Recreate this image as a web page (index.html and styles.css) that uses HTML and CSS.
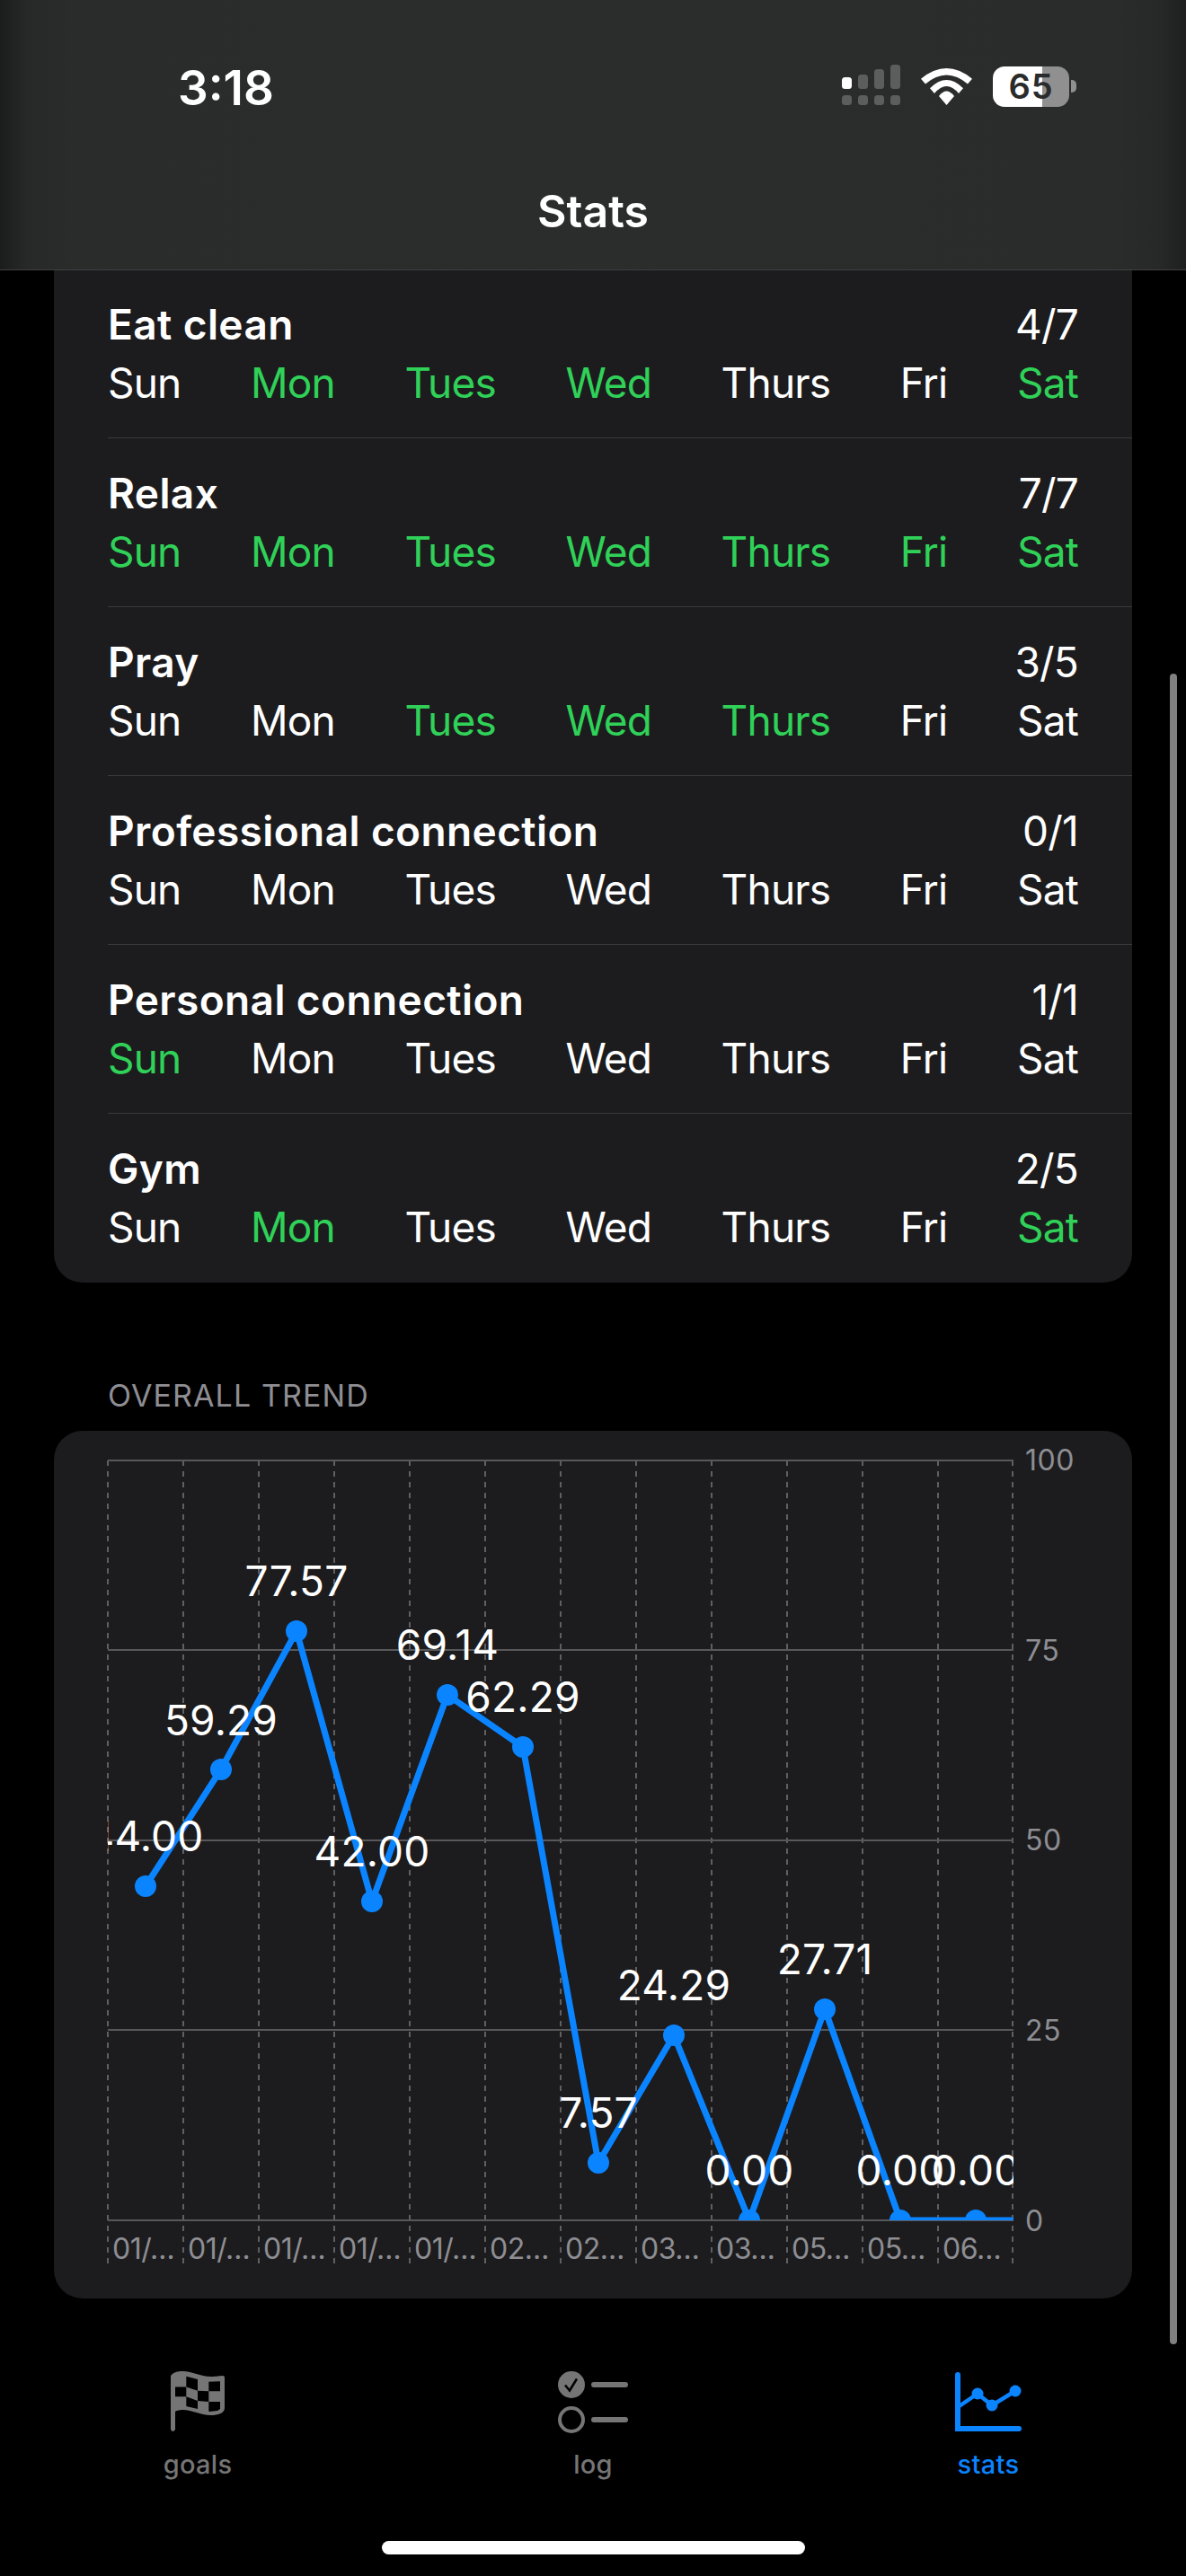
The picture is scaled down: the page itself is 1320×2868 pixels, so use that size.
FILE: index.html
```html
<!DOCTYPE html>
<html>
	<head>
		<meta charset="UTF-8">
		<title>Stats</title>
		<link rel="stylesheet" href="styles.css">
	</head>
	<body>
		<div class="page">
			<header class="top">
				<div class="status">
					<span class="clock">3:18</span>
					<div class="status-icons">
						<svg class="signal" width="65" height="47" viewBox="0 0 65 47">
							<rect x="0" y="14" width="11" height="13" rx="3.5" fill="#fff"/>
							<rect x="18" y="11" width="11" height="16" rx="3.5"/>
							<rect x="36" y="5" width="11" height="22" rx="3.5"/>
							<rect x="54" y="0" width="11" height="27" rx="3.5"/>
							<rect x="0" y="34" width="11" height="11" rx="3.5"/>
							<rect x="18" y="34" width="11" height="11" rx="3.5"/>
							<rect x="36" y="34" width="11" height="11" rx="3.5"/>
							<rect x="54" y="34" width="11" height="11" rx="3.5"/>
						</svg>
						<svg class="wifi" width="57" height="41" viewBox="0 0 57 41">
							<path d="M0 11.7Q28.5 -11.7 57 11.7L52 17.5Q28.5 -2.5 5 17.5Z"/>
							<path d="M10 22.3Q28.5 3.7 47 22.3L42 28Q28.5 12 15 28Z"/>
							<path d="M20 31Q28.5 20 37 31L28.5 41Z"/>
						</svg>
						<div class="battery"><span>65</span></div>
						<div class="battery-tip"></div>
					</div>
				</div>
				<h1 class="title">Stats</h1>
			</header>

			<main class="content">
				<section class="card habits">
					<div class="habit">
						<div class="habit-head"><span class="habit-name">Eat clean</span><span class="habit-count">4/7</span></div>
						<div class="days"><span>Sun</span><span class="on">Mon</span><span class="on">Tues</span><span class="on">Wed</span><span>Thurs</span><span>Fri</span><span class="on">Sat</span></div>
					</div>
					<div class="habit">
						<div class="habit-head"><span class="habit-name">Relax</span><span class="habit-count">7/7</span></div>
						<div class="days"><span class="on">Sun</span><span class="on">Mon</span><span class="on">Tues</span><span class="on">Wed</span><span class="on">Thurs</span><span class="on">Fri</span><span class="on">Sat</span></div>
					</div>
					<div class="habit">
						<div class="habit-head"><span class="habit-name">Pray</span><span class="habit-count">3/5</span></div>
						<div class="days"><span>Sun</span><span>Mon</span><span class="on">Tues</span><span class="on">Wed</span><span class="on">Thurs</span><span>Fri</span><span>Sat</span></div>
					</div>
					<div class="habit">
						<div class="habit-head"><span class="habit-name">Professional connection</span><span class="habit-count">0/1</span></div>
						<div class="days"><span>Sun</span><span>Mon</span><span>Tues</span><span>Wed</span><span>Thurs</span><span>Fri</span><span>Sat</span></div>
					</div>
					<div class="habit">
						<div class="habit-head"><span class="habit-name">Personal connection</span><span class="habit-count">1/1</span></div>
						<div class="days"><span class="on">Sun</span><span>Mon</span><span>Tues</span><span>Wed</span><span>Thurs</span><span>Fri</span><span>Sat</span></div>
					</div>
					<div class="habit">
						<div class="habit-head"><span class="habit-name">Gym</span><span class="habit-count">2/5</span></div>
						<div class="days"><span>Sun</span><span class="on">Mon</span><span>Tues</span><span>Wed</span><span>Thurs</span><span>Fri</span><span class="on">Sat</span></div>
					</div>
				</section>

				<h2 class="section-label">OVERALL TREND</h2>

				<section class="card chart">
					<svg width="1200" height="966" viewBox="60 1593 1200 966">
						<defs>
							<clipPath id="plot"><rect x="120" y="1590" width="1008" height="882"/></clipPath>
						</defs>
						<path class="grid-v" d="M120 1626V2520M204 1626V2520M288 1626V2520M372 1626V2520M456 1626V2520M540 1626V2520M624 1626V2520M708 1626V2520M792 1626V2520M876 1626V2520M960 1626V2520M1044 1626V2520M1127 1626V2520"/>
						<path class="grid-h" d="M120 1626H1128M120 1837H1128M120 2049H1128M120 2260H1128M120 2472H1128"/>
						<g clip-path="url(#plot)">
							<polyline class="trend" points="162,2100 246,1970 330,1816 414,2117 498,1887 582,1945 666,2408 750,2266 834,2472 918,2237 1002,2472 1086,2472 1128,2472"/>
							<g class="dots">
								<circle cx="162" cy="2100" r="12"/>
								<circle cx="246" cy="1970" r="12"/>
								<circle cx="330" cy="1816" r="12"/>
								<circle cx="414" cy="2117" r="12"/>
								<circle cx="498" cy="1887" r="12"/>
								<circle cx="582" cy="1945" r="12"/>
								<circle cx="666" cy="2408" r="12"/>
								<circle cx="750" cy="2266" r="12"/>
								<circle cx="834" cy="2472" r="12"/>
								<circle cx="918" cy="2237" r="12"/>
								<circle cx="1002" cy="2472" r="12"/>
								<circle cx="1086" cy="2472" r="12"/>
							</g>
							<g class="values">
								<text x="162" y="2061">44.00</text>
								<text x="246" y="1932">59.29</text>
								<text x="330" y="1777">77.57</text>
								<text x="414" y="2078">42.00</text>
								<text x="498" y="1848">69.14</text>
								<text x="582" y="1906">62.29</text>
								<text x="666" y="2369">7.57</text>
								<text x="750" y="2227">24.29</text>
								<text x="834" y="2433">0.00</text>
								<text x="918" y="2198">27.71</text>
								<text x="1002" y="2433">0.00</text>
								<text x="1086" y="2433">0.00</text>
							</g>
						</g>
						<g class="axis-y">
							<text x="1141" y="1637">100</text>
							<text x="1141" y="1849">75</text>
							<text x="1141" y="2060">50</text>
							<text x="1141" y="2272">25</text>
							<text x="1141" y="2484">0</text>
						</g>
						<g class="axis-x">
							<text x="125" y="2515">01/…</text>
							<text x="209" y="2515">01/…</text>
							<text x="293" y="2515">01/…</text>
							<text x="377" y="2515">01/…</text>
							<text x="461" y="2515">01/…</text>
							<text x="545" y="2515">02…</text>
							<text x="629" y="2515">02…</text>
							<text x="713" y="2515">03…</text>
							<text x="797" y="2515">03…</text>
							<text x="881" y="2515">05…</text>
							<text x="965" y="2515">05…</text>
							<text x="1049" y="2515">06…</text>
						</g>
					</svg>
				</section>
			</main>

			<nav class="tabs">
				<div class="tab">
					<svg width="60" height="70" viewBox="0 0 60 70">
						<path class="flag" d="M0 5C3 1 8 0 13 0C25 0 32 6 45 6C50 6 56 5 58 5Q60 5 60 7V41C60 47 52 49 45 49C32 49 25 43 13 43C9 43 6 44 5 45V65Q2.5 69 0 65Z"/>
						<g class="flag-cells">
							<polygon points="17.3,5.7 30,9 30,21.7 17.3,17.5"/>
							<polygon points="42.3,11.7 55,11.2 55,22.3 42.3,22.3"/>
							<polygon points="5,17.5 17.3,17.5 17.3,28.3 5,28.3"/>
							<polygon points="30,21.7 42.3,22.3 42.3,34 30,33"/>
							<polygon points="17.3,28.3 30,33 30,42 17.3,39"/>
							<polygon points="42.3,34 55,34 55,42 52,44 42.3,45"/>
						</g>
					</svg>
					<span>goals</span>
				</div>
				<div class="tab">
					<svg width="78" height="70" viewBox="0 0 78 70">
						<circle class="tab-fill" cx="15" cy="15" r="15"/>
						<path d="M8 15.5L13 21.5L21 8.5" fill="none" stroke="#000" stroke-width="2.5"/>
						<circle cx="15" cy="54" r="13" fill="none" stroke="#757575" stroke-width="4"/>
						<rect class="tab-fill" x="37" y="12" width="41" height="6" rx="3"/>
						<rect class="tab-fill" x="37" y="51" width="41" height="6" rx="3"/>
					</svg>
					<span>log</span>
				</div>
				<div class="tab active">
					<svg width="74" height="70" viewBox="0 0 74 70">
						<path d="M3 4V64H71" fill="none" stroke="#0a84ff" stroke-width="6" stroke-linecap="round"/>
						<polyline points="3,40 25,25 41,38 67,22" fill="none" stroke="#0a84ff" stroke-width="4.5"/>
						<circle cx="25" cy="25" r="6.5" fill="#0a84ff"/>
						<circle cx="41" cy="38" r="6.5" fill="#0a84ff"/>
						<circle cx="67" cy="22" r="6.5" fill="#0a84ff"/>
					</svg>
					<span>stats</span>
				</div>
			</nav>
			<div class="home-bar"></div>
			<div class="scrollbar"></div>
		</div>
	</body>
</html>
```
FILE: styles.css
```css
*{
	box-sizing:border-box;
}
body{
	margin:0;
	background:#000;
	color:#fff;
	font-family:Inter,"Liberation Sans",sans-serif;
}
.page{
	position:relative;
	width:1320px;
	height:2868px;
	overflow:hidden;
}

/* top bar */
.top{
	height:300px;
	padding:0 122px;
	background:linear-gradient(to right,#1b1c1c 0,#272929 30px,#2a2c2c 80px,#2b2c2c 660px,#2a2c2c 1240px,#272929 1290px,#1e1f1f 100%);
	box-shadow:0 1px 0 #3e3f3f;
	position:relative;
	z-index:1;
}
.status{
	display:flex;
	justify-content:space-between;
	align-items:flex-start;
	height:205px;
}
.clock{
	margin:66px 0 0 76px;
	font-size:53px;
	line-height:64px;
	font-weight:600;
}
.status-icons{
	display:flex;
	align-items:flex-start;
	margin:72px 0 0;
}
.signal{
	fill:#5c5e5e;
	margin-right:23px;
}
.wifi{
	fill:#fff;
	margin:4px 23px 0 0;
}
.battery{
	width:85px;
	height:45px;
	margin-top:2px;
	border-radius:13px;
	background:linear-gradient(to right,#fff 55px,#909090 55px);
	color:#2a2c2c;
	font-size:38px;
	font-weight:600;
	line-height:45px;
	letter-spacing:1px;
	text-align:center;
}
.battery-tip{
	width:6px;
	height:14px;
	margin:17px 0 0 2px;
	border-radius:0 5px 5px 0;
	background:#909090;
}
.title{
	margin:0;
	font-size:50px;
	line-height:60px;
	font-weight:600;
	text-align:center;
}

/* cards */
.content{
	padding:0 60px;
}
.card{
	background:#1c1c1e;
	border-radius:32px;
}
.habits{
	padding-left:60px;
	border-radius:0 0 32px 32px;
}
.habit{
	padding:31px 60px 31px 0;
	border-bottom:1px solid #3a3a3c;
}
.habit:last-child{
	border-bottom:0;
	padding-bottom:32px;
}
.habit-head,.days{
	display:flex;
	justify-content:space-between;
	align-items:baseline;
	font-size:46px;
	line-height:60px;
	letter-spacing:-.8px;
}
.habit-head{
	margin-bottom:5px;
}
.habit-name{
	font-weight:600;
	letter-spacing:.4px;
}
.on{
	color:#30d158;
}
.section-label{
	margin:106px 0 19px 60px;
	font-size:34px;
	line-height:40px;
	font-weight:400;
	letter-spacing:1.1px;
	color:#8e8e93;
}
.chart{
	height:966px;
}
.chart svg{
	display:block;
}
.grid-v{
	fill:none;
	stroke:#5f5f61;
	stroke-width:2;
	stroke-dasharray:6 6;
}
.grid-h{
	fill:none;
	stroke:#58585a;
	stroke-width:2;
}
.trend{
	fill:none;
	stroke:#0a84ff;
	stroke-width:7;
}
.dots{
	fill:#0a84ff;
}
.values text{
	fill:#fff;
	font-size:46px;
	letter-spacing:.2px;
	text-anchor:middle;
}
.axis-y text,.axis-x text{
	fill:#8e8e93;
	font-size:32px;
}
.axis-y text{
	letter-spacing:.5px;
}
.axis-x text{
	letter-spacing:-.5px;
}

/* tab bar */
.tabs{
	display:grid;
	grid-template-columns:repeat(3,440px);
	margin-top:81px;
}
.tab{
	display:flex;
	flex-direction:column;
	align-items:center;
	color:#757575;
	font-size:29px;
	line-height:36px;
	font-weight:500;
	letter-spacing:.3px;
}
.tab svg{
	display:block;
	margin-bottom:16px;
}
.tab.active{
	color:#0a84ff;
}
.flag,.tab-fill{
	fill:#757575;
}
.flag-cells{
	fill:#000;
}
.home-bar{
	width:471px;
	height:15px;
	margin:67px auto 0;
	border-radius:8px;
	background:#fff;
}
.scrollbar{
	position:absolute;
	left:1302px;
	top:750px;
	width:8px;
	height:1860px;
	border-radius:4px;
	background:#808080;
}
```
